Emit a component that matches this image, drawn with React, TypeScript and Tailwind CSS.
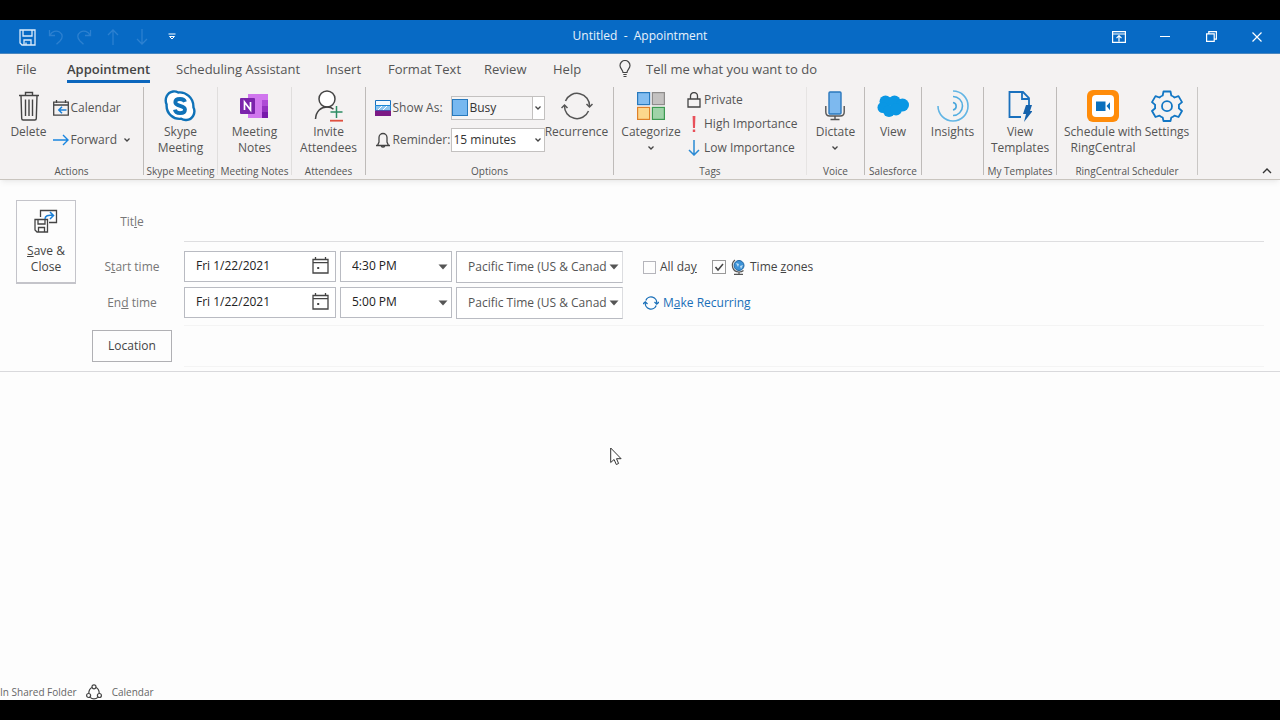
import type { ReactNode } from "react"
import clsx from "clsx"

const tabs = [
  { label: "File", width: "w-[68px]" },
  { label: "Appointment", width: "w-[109px]", active: true },
  { label: "Scheduling Assistant", width: "w-[150px]" },
  { label: "Insert", width: "w-[62px]" },
  { label: "Format Text", width: "w-[96px]" },
  { label: "Review", width: "w-[69px]" },
  { label: "Help", width: "w-[66px]" },
]

function Group({ label, className, children }: { label: string; className: string; children: ReactNode }) {
  return (
    <section
      aria-label={label || "Insights"}
      className={clsx("flex h-[88px] shrink-0 flex-col justify-between border-r", className)}
    >
      <div className="flex justify-center pt-px">{children}</div>
      <div className="h-3 text-center text-[10px] leading-4 whitespace-nowrap">{label}</div>
    </section>
  )
}

function BigButton({ icon, lines, className, menu }: { icon: ReactNode; lines: string[]; className?: string; menu?: boolean }) {
  return (
    <button type="button" className={clsx("flex flex-col items-center text-center leading-4 whitespace-nowrap", className)}>
      <span className="flex h-9 items-center justify-center">{icon}</span>
      {lines.map((line) => (
        <span key={line}>{line}</span>
      ))}
      {menu && <Chevron className="mt-1" />}
    </button>
  )
}

function SmallButton({ icon, children }: { icon: ReactNode; children: ReactNode }) {
  return (
    <button type="button" className="flex h-6 items-center gap-[2px] whitespace-nowrap">
      <span className="flex w-4 shrink-0 justify-center">{icon}</span>
      {children}
    </button>
  )
}

function Chevron({ className }: { className?: string }) {
  return (
    <svg viewBox="0 0 8 8" className={clsx("size-2", className)} fill="none" stroke="#444" strokeWidth="1.3">
      <path d="M1.500 2.500 4 5l2.500-2.500" />
    </svg>
  )
}

function Caret() {
  return (
    <svg viewBox="0 0 10 6" className="pointer-events-none absolute top-1/2 right-1 h-[6px] w-[10px] -translate-y-1/2">
      <path d="M0.5 0.5h9L5 5.5z" fill="#555" />
    </svg>
  )
}

function SaveIcon() {
  return (
    <svg viewBox="0 0 17 17" className="size-[17px]" fill="none" stroke="#dcebfa" strokeWidth="1.3">
      <path d="M1 1h15v15H3L1 14zM4 1v6h9V1M5 16v-5h7v5M7 13.5V16" />
    </svg>
  )
}

function TrashIcon() {
  return (
    <svg viewBox="0 0 22 30" className="h-[30px] w-[22px]" fill="none" stroke="#444" strokeWidth="1.4">
      <path d="M1 4.5h20M7.5 4.500V1.500h7v3M3 4.500l.7 23q0 1.500 1.500 1.500h11.600q1.500 0 1.500-1.500l.7-23M7.500 8.500v16.500M11 8.500v16.500M14.500 8.500v16.500" />
    </svg>
  )
}

function CalendarBackIcon() {
  return (
    <svg viewBox="0 0 16 16" className="size-4" fill="none">
      <path d="M.7 2.200h14.600v13H.7zM.7 5h14.600M3.500 0v3M12.500 0v3" stroke="#444" strokeWidth="1.3" />
      <path d="M13.500 10H6M9 6.800 5.800 10 9 13.200" stroke="#1a7fd6" strokeWidth="1.5" />
    </svg>
  )
}

function SkypeIcon() {
  return (
    <svg viewBox="0 0 32 32" className="size-8">
      <path
        d="M9 1.500c2-.3 3.800.2 5.200 1C21.500 1.600 29.800 7.500 29.400 17.300c2.800 5.500-.8 12.300-7 12.700-2 .2-3.800-.3-5.200-1.200C9.500 29.800 2 23.500 2.600 14.500.2 9 3 2.500 9 1.500z"
        fill="#fff"
        stroke="#0f72b8"
        strokeWidth="2.400"
      />
      <path
        d="M21 11.800C20.300 9.700 18.500 9 16 9c-3 0-4.700 1.300-4.700 3.300 0 4.700 9.700 2.400 9.700 7.200 0 2.400-2.100 3.600-5 3.600-2.700 0-4.700-1.200-5.100-3.500"
        fill="none"
        stroke="#0f72b8"
        strokeWidth="3.800"
      />
    </svg>
  )
}

function OneNoteIcon() {
  return (
    <svg viewBox="0 0 28 26" className="h-[26px] w-7">
      <path d="M8 1h20v24H8z" fill="#d076ee" />
      <path d="M22 7h6v6h-6z" fill="#ae4bd5" />
      <path d="M22 13h6v6h-6z" fill="#9332bf" />
      <path d="M22 19h6v6h-6z" fill="#7719aa" />
      <rect y="5" width="15" height="16" rx="1" fill="#7b23ab" />
      <path d="M4.500 17V9l6 8V9" fill="none" stroke="#fff" strokeWidth="1.700" />
    </svg>
  )
}

function InviteIcon() {
  return (
    <svg viewBox="0 0 30 32" className="h-8 w-[30px]" fill="none" strokeWidth="1.500">
      <circle cx="13" cy="9" r="8" fill="#fff" stroke="#444" />
      <path d="M1.500 29C2 21 7 17 13 17c3 0 5 .8 6.500 2.200" stroke="#444" />
      <path d="M22.500 16v12M16.500 22h12" stroke="#2c8c63" />
      <path d="M16 30.700h13" stroke="#e0503f" strokeWidth="1.800" />
    </svg>
  )
}

function RecurrenceIcon() {
  return (
    <svg viewBox="0 0 32 28" className="h-7 w-8" fill="none" stroke="#555" strokeWidth="1.500">
      <path d="M4.500 9a12.500 12.500 0 0 1 24 5.500M27.500 19a12.500 12.500 0 0 1-24-5.500" />
      <path d="m25.500 12 3 3 3-3M.5 16l3-3 3 3" />
    </svg>
  )
}

function CategorizeIcon() {
  return (
    <svg viewBox="0 0 28 28" className="size-7" strokeWidth="1.200">
      <rect x=".6" y=".6" width="12" height="12" fill="#83bdf0" stroke="#2779bd" />
      <rect x="15.400" y=".6" width="12" height="12" fill="#c4c2c1" stroke="#8e8c8b" />
      <rect x=".6" y="15.400" width="12" height="12" fill="#fcd78c" stroke="#df8028" />
      <rect x="15.400" y="15.400" width="12" height="12" fill="#9fd3a8" stroke="#3d9a52" />
    </svg>
  )
}

function DictateIcon() {
  return (
    <svg viewBox="0 0 20 30" className="h-[30px] w-5" fill="none">
      <rect x="4" y="1" width="12" height="22" rx="1" fill="#7db9ef" stroke="#2a78bd" strokeWidth="1.400" />
      <path d="M.8 15v6q0 4 4 4h10.400q4 0 4-4v-6M10 25v3.500M5.500 28.500h9" stroke="#555" strokeWidth="1.400" />
    </svg>
  )
}

function SalesforceIcon() {
  return (
    <svg viewBox="0 0 32 24" className="h-6 w-8" fill="#0a97e4">
      <circle cx="8.500" cy="7.500" r="6" />
      <circle cx="17.500" cy="7.500" r="6" />
      <circle cx="25.500" cy="11" r="6.500" />
      <circle cx="6" cy="13.500" r="5.500" />
      <circle cx="12" cy="17" r="6" />
      <circle cx="19" cy="15.500" r="6" />
    </svg>
  )
}

function InsightsIcon() {
  return (
    <svg viewBox="0 0 32 32" className="size-8" fill="none" strokeWidth="1.600">
      <path d="M16 1a15 15 0 1 1-15 15" stroke="#62b5e4" />
      <path d="M16 6.500a9.500 9.500 0 0 1 0 19" stroke="#53ade0" />
      <path d="M16 12.500a3.800 3.800 0 0 1 0 7.500" stroke="#4aa6dc" />
    </svg>
  )
}

function TemplatesIcon() {
  return (
    <svg viewBox="0 0 24 32" className="h-8 w-6" fill="none">
      <path d="M13 27H1.500V2H15l6 6v8M14 2v7h7" stroke="#1a70bd" strokeWidth="1.800" />
      <path d="M18 15h6l-2 6h2.500L16 32l2-8h-3z" fill="#1562ac" />
    </svg>
  )
}

function RingCentralIcon() {
  return (
    <svg viewBox="0 0 32 32" className="size-8">
      <rect width="32" height="32" rx="6" fill="#ff8c0a" />
      <rect x="5" y="5" width="22" height="22" rx="4" fill="#fff" />
      <path d="M9 11.500h9.500v9.500H9zM19.500 16l3.500-3.800v8z" fill="#0a70bd" />
    </svg>
  )
}

function GearIcon() {
  return (
    <svg viewBox="0 0 32 32" className="size-8" fill="none" stroke="#1176c4" strokeWidth="1.800" strokeLinejoin="round">
      <path d="M12.500 1.500h7l.8 4q1.800.7 3.200 2l4-1.400 3.500 6-3.200 2.800q.3 1.800 0 3.400l3.200 2.700-3.500 6-4-1.400q-1.400 1.200-3.200 1.900l-.8 3.500h-7l-.8-3.500q-1.800-.7-3.200-1.900l-4 1.400-3.500-6 3.200-2.700q-.3-1.600 0-3.400L1 12.100l3.500-6 4 1.400q1.400-1.300 3.200-2z" />
      <circle cx="16" cy="16.200" r="5" />
    </svg>
  )
}

function DateIcon() {
  return (
    <svg viewBox="0 0 17 17" className="pointer-events-none absolute top-[6px] right-[7px] size-[17px]" fill="none" stroke="#444" strokeWidth="1.300">
      <path d="M1 2.500h15v13.500H1zM1 5.700h15M3.500 0v3M13.500 0v3" />
      <path d="M5.200 10h2v2h-2z" fill="#444" stroke="none" />
    </svg>
  )
}

function TimeRow({ id, label, time, children }: { id: string; label: ReactNode; time: string; children: ReactNode }) {
  return (
    <div className="flex h-9 items-center">
      <label htmlFor={`${id}-date`} className="w-20 text-center text-[#777]">
        {label}
      </label>
      <div className="ml-3 flex gap-1">
        <div className="relative">
          <input
            id={`${id}-date`}
            defaultValue="Fri 1/22/2021"
            className="h-[31px] w-[152px] border border-[#b9bbc2] bg-white pb-[2px] pl-[11px] text-[#222]"
          />
          <DateIcon />
        </div>
        <div className="relative">
          <select
            aria-label={`${id} time of day`}
            className="h-[31px] w-[112px] appearance-none border border-[#b9bbc2] bg-white pb-[2px] pl-[11px] text-[#222]"
          >
            <option>{time}</option>
          </select>
          <Caret />
        </div>
        <div className="relative">
          <select
            aria-label={`${id} time zone`}
            className="h-8 w-[167px] appearance-none border border-r-[#dcdde0] border-[#b9bbc2] bg-white pr-3 pl-[11px] text-[#555]"
          >
            <option>Pacific Time (US &amp; Canad</option>
          </select>
          <Caret />
        </div>
      </div>
      <div className="ml-5 flex items-center text-[#444]">{children}</div>
    </div>
  )
}

function TitleBar() {
  return (
    <header className="grid h-[34px] grid-cols-[1fr_auto_1fr] items-center border-b border-[#4a87bf] bg-[#076ac5] text-[#e8f2fc]">
      <div className="flex items-center gap-3 pt-px pl-[19px]">
        <button type="button" aria-label="Save">
          <SaveIcon />
        </button>
        <button type="button" aria-label="Undo">
          <svg viewBox="0 0 16 16" className="size-4" fill="none" stroke="#2c80d0" strokeWidth="1.300">
            <path d="M1.500 1v5.500H7M1.800 6.300C4 2.500 8 1 11.500 3c3.500 2.300 3.500 6 .5 9l-3.500 3.300" />
          </svg>
        </button>
        <button type="button" aria-label="Redo">
          <svg viewBox="0 0 16 16" className="size-4" fill="none" stroke="#2c80d0" strokeWidth="1.300">
            <path d="M14.500 1v5.500H9M14.200 6.300C12 2.500 8 1 4.500 3 1 5.300 1 9 4 12l3.500 3.300" />
          </svg>
        </button>
        <button type="button" aria-label="Previous item">
          <svg viewBox="0 0 16 18" className="h-[18px] w-4" fill="none" stroke="#2c80d0" strokeWidth="1.300">
            <path d="M9 17V2M4 7l5-5 5 5" />
          </svg>
        </button>
        <button type="button" aria-label="Next item">
          <svg viewBox="0 0 16 18" className="h-[18px] w-4" fill="none" stroke="#2c80d0" strokeWidth="1.300">
            <path d="M10 1v15M5 11l5 5 5-5" />
          </svg>
        </button>
        <button type="button" aria-label="Customize toolbar" className="ml-2">
          <svg viewBox="0 0 8 8" className="size-2" fill="none" stroke="#fff" strokeWidth="1">
            <path d="M.5 1h7M1.500 3.500 4 6l2.500-2.500z" />
          </svg>
        </button>
      </div>
      <h1 className="pb-[2px] text-[12px] whitespace-pre">Untitled  -  Appointment</h1>
      <div className="flex justify-end">
        <button type="button" aria-label="Ribbon display options" className="flex w-[46px] justify-center">
          <svg viewBox="0 0 14 12" className="h-3 w-[14px]" fill="none" stroke="#fff" strokeWidth="1.200">
            <path d="M.6.6h12.800v10.800H.6zM.6 3h12.800M7 10.500V5M4.500 7.200 7 4.700l2.500 2.500" />
          </svg>
        </button>
        <button type="button" aria-label="Minimize" className="flex w-[46px] items-center justify-center">
          <span className="h-px w-[10px] bg-white" />
        </button>
        <button type="button" aria-label="Restore" className="flex w-[46px] items-center justify-center">
          <svg viewBox="0 0 11 11" className="size-[11px]" fill="none" stroke="#fff" strokeWidth="1.200">
            <path d="M.6 2.800h7.600v7.600H.6zM2.800 2.800V.6h7.600v7.600H8.200" />
          </svg>
        </button>
        <button type="button" aria-label="Close" className="flex w-[46px] items-center justify-center">
          <svg viewBox="0 0 10 10" className="size-[10px]" fill="none" stroke="#fff" strokeWidth="1.200">
            <path d="m.5.5 9 9M9.500.5l-9 9" />
          </svg>
        </button>
      </div>
    </header>
  )
}

function Ribbon() {
  return (
    <div className="flex items-start border-b border-[#c9c5bf] bg-[#f4f2f2] pt-[3px] pb-[4px] text-[#555] shadow-md shadow-black/5">
      <Group label="Actions" className="w-36 border-[#bebbb9]">
        <BigButton className="ml-1 w-12" icon={<TrashIcon />} lines={["Delete"]} />
        <div className="flex w-[90px] flex-col gap-2 pt-2">
          <SmallButton icon={<CalendarBackIcon />}>Calendar</SmallButton>
          <button type="button" className="flex h-6 items-center gap-[2px]">
            <svg viewBox="0 0 16 12" className="h-3 w-4" fill="none" stroke="#1a86e0" strokeWidth="1.400">
              <path d="M0 6h15M10 1l5 5-5 5" />
            </svg>
            Forward
            <Chevron className="ml-1" />
          </button>
        </div>
      </Group>
      <Group label="Skype Meeting" className="w-[74px] border-[#e0dedd]">
        <BigButton icon={<SkypeIcon />} lines={["Skype", "Meeting"]} />
      </Group>
      <Group label="Meeting Notes" className="w-[74px] border-[#e0dedd]">
        <BigButton icon={<OneNoteIcon />} lines={["Meeting", "Notes"]} />
      </Group>
      <Group label="Attendees" className="w-[74px] border-[#bebbb9]">
        <BigButton icon={<InviteIcon />} lines={["Invite", "Attendees"]} />
      </Group>
      <Group label="Options" className="w-[248px] border-[#bebbb9]">
        <div className="ml-1 grid grid-cols-[76px_94px] gap-y-2 pt-2">
          <label htmlFor="show-as" className="flex h-6 items-center gap-[2px] whitespace-nowrap">
            <svg viewBox="0 0 16 16" className="size-4 shrink-0">
              <path d="M.5.5h15v5H.5z" fill="#f5fafe" stroke="#1a70bd" />
              <path d="M.5 5.500h15v5H.5z" fill="#8ec4ee" stroke="#1a86d6" />
              <path d="m3 10 4-4M8 10l4-4" stroke="#fff" />
              <path d="M0 10.500h16V16H0z" fill="#7b1a85" />
            </svg>
            Show As:
          </label>
          <div className="relative">
            <select id="show-as" className="h-6 w-full appearance-none border border-[#c3c1c0] bg-[#f6f5f5] pl-[18px] text-[#333]">
              <option>Busy</option>
            </select>
            <span className="pointer-events-none absolute top-[3px] left-px h-[17px] w-4 border border-[#2779bd] bg-[#77b8f0]" />
            <span className="pointer-events-none absolute top-px right-px flex h-[22px] w-3 items-center justify-center border-l border-[#c3c1c0] bg-white">
              <Chevron />
            </span>
          </div>
          <label htmlFor="reminder" className="flex h-6 items-center gap-[2px] whitespace-nowrap">
            <svg viewBox="0 0 16 18" className="h-[18px] w-4 shrink-0" fill="none" stroke="#444" strokeWidth="1.300">
              <path d="M1 14.500h14M2.500 14.500 4 11V6.500a4 4 0 0 1 8 0V11l1.500 3.500M6.300 15a1.800 1.800 0 0 0 3.400 0" />
            </svg>
            Reminder:
          </label>
          <div className="relative">
            <select id="reminder" className="h-6 w-full appearance-none border border-[#c3c1c0] bg-white pl-[2px] text-[#333]">
              <option>15 minutes</option>
            </select>
            <Chevron className="pointer-events-none absolute top-2 right-[3px]" />
          </div>
        </div>
        <BigButton className="w-16" icon={<RecurrenceIcon />} lines={["Recurrence"]} />
      </Group>
      <Group label="Tags" className="w-[193px] border-[#e6e4e3]">
        <BigButton className="mr-1 w-[62px]" icon={<CategorizeIcon />} lines={["Categorize"]} menu />
        <div className="flex w-[114px] flex-col">
          <SmallButton
            icon={
              <svg viewBox="0 0 14 16" className="h-4 w-[14px]" fill="none" stroke="#444" strokeWidth="1.300">
                <path d="M1 7h12v8H1zM3.500 7V4a3.500 3.500 0 0 1 7 0v3" />
              </svg>
            }
          >
            Private
          </SmallButton>
          <SmallButton
            icon={
              <svg viewBox="0 0 4 16" className="h-4 w-1" fill="#e8505a">
                <path d="M.6 0h2.800L3 12H1zM.8 13.500h2.400V16H.8z" />
              </svg>
            }
          >
            High Importance
          </SmallButton>
          <SmallButton
            icon={
              <svg viewBox="0 0 12 16" className="h-4 w-3" fill="none" stroke="#2a8ad4" strokeWidth="1.500">
                <path d="M6 0v15M1 10l5 5 5-5" />
              </svg>
            }
          >
            Low Importance
          </SmallButton>
        </div>
      </Group>
      <Group label="Voice" className="w-[58px] border-[#bebbb9]">
        <BigButton icon={<DictateIcon />} lines={["Dictate"]} menu />
      </Group>
      <Group label="Salesforce" className="w-[57px] border-[#bebbb9]">
        <BigButton icon={<SalesforceIcon />} lines={["View"]} />
      </Group>
      <Group label="" className="w-[62px] border-[#bebbb9]">
        <BigButton icon={<InsightsIcon />} lines={["Insights"]} />
      </Group>
      <Group label="My Templates" className="w-[73px] border-[#bebbb9]">
        <BigButton icon={<TemplatesIcon />} lines={["View", "Templates"]} />
      </Group>
      <Group label="RingCentral Scheduler" className="w-[141px] border-[#c9c7c5]">
        <BigButton className="w-20" icon={<RingCentralIcon />} lines={["Schedule with", "RingCentral"]} />
        <BigButton className="w-12" icon={<GearIcon />} lines={["Settings"]} />
      </Group>
      <button type="button" aria-label="Collapse the ribbon" className="mr-2 ml-auto self-end">
        <svg viewBox="0 0 10 8" className="h-2 w-[10px]" fill="none" stroke="#333" strokeWidth="1.400">
          <path d="m1 6 4-4 4 4" />
        </svg>
      </button>
    </div>
  )
}

function AppointmentForm() {
  return (
    <form className="flex items-start gap-4 border-b border-[#d9d9dc] px-4 pt-5">
      <button
        type="button"
        className="flex h-[84px] w-[60px] shrink-0 flex-col items-center border border-b-2 border-[#c4c4ca] pt-[8px] leading-4 text-[#444]"
      >
        <svg viewBox="0 0 24 24" className="mb-[10px] size-6" fill="none" stroke="#444" strokeWidth="1.300">
          <path d="M6.500 8V1.500h16v12H15" />
          <path d="M1 10.500h12.500v12.500H3L1 21zM4 10.500v4.500h7v-4.500M4.500 23v-4.500h6V23" />
          <path d="M11 10c0-3 3-4.500 8-3.500M16 3l3.500 3.500L16 10" stroke="#1a7fd6" strokeWidth="1.500" />
        </svg>
        <span>
          <u>S</u>ave &amp;
        </span>
        <span>Close</span>
      </button>
      <div className="min-w-0 flex-1">
        <div className="mb-[7px] flex h-[42px]">
          <label htmlFor="title" className="w-20 text-center leading-[44px] text-[#777]">
            Tit<u>l</u>e
          </label>
          <input id="title" className="ml-3 flex-1 border-b border-[#dedee0] outline-none" />
        </div>
        <TimeRow id="start" label={<>S<u>t</u>art time</>} time="4:30 PM">
          <label className="flex w-[69px] items-center gap-1">
            <input type="checkbox" className="size-[13px] appearance-none border border-[#b5b5bb]" />
            <span>
              All da<u>y</u>
            </span>
          </label>
          <label className="flex items-center gap-1">
            <span className="relative flex">
              <input type="checkbox" defaultChecked className="size-[14px] appearance-none border border-[#999]" />
              <svg viewBox="0 0 14 14" className="pointer-events-none absolute inset-0 size-[14px]" fill="none" stroke="#444" strokeWidth="1.500">
                <path d="m3.500 7 2.500 3 5-6" />
              </svg>
            </span>
            <svg viewBox="0 0 16 16" className="size-4" fill="none">
              <circle cx="9" cy="6.500" r="5" fill="#3d93d8" stroke="#2467a0" />
              <path d="m6 4 3 1-1 3zM10 7l3-1-2 4z" fill="#bfe0f5" />
              <path d="M5 1C0 5 2.500 13 9 13c2 0 3.500-.6 4.500-1.500M9 13v2M4 15.300h9" stroke="#555" strokeWidth="1.200" />
            </svg>
            <span>
              Time <u>z</u>ones
            </span>
          </label>
        </TimeRow>
        <TimeRow id="end" label={<>En<u>d</u> time</>} time="5:00 PM">
          <a href="#recurring" className="flex items-center gap-1 text-[#1a6fb8]">
            <svg viewBox="0 0 16 14" className="h-[14px] w-4" fill="none" stroke="currentColor" strokeWidth="1.300">
              <path d="M2.800 4.500A5.700 5.700 0 0 1 13.700 7.500M13.200 9.500A5.700 5.700 0 0 1 2.300 6.500" />
              <path d="m11.500 6 2.200 2.200L16 6M0 8l2.300-2.200L4.500 8" />
            </svg>
            <span>
              M<u>a</u>ke Recurring
            </span>
          </a>
        </TimeRow>
        <div className="mt-[4px] mb-[4px] flex h-[42px] items-center">
          <button type="button" className="h-8 w-20 border border-[#b0b0b4] text-[#444]">
            Location
          </button>
          <input aria-label="Location" className="ml-3 h-full flex-1 border-y border-[#f4f4f4] outline-none" />
        </div>
      </div>
    </form>
  )
}

export default function App() {
  return (
    <div className="flex min-h-screen flex-col bg-black py-5 font-['Open_Sans','Noto_Sans',sans-serif] text-[12px]">
      <main className="flex flex-1 flex-col bg-[#fdfdfd]">
        <TitleBar />
        <nav aria-label="Ribbon tabs" className="flex h-[30px] items-center bg-[#f4f2f2] pl-4 text-[13px] text-[#555]">
          {tabs.map((tab) => (
            <div key={tab.label} className={clsx("shrink-0 first:w-[51px]", tab.width)}>
              <button
                type="button"
                className={clsx(
                  "h-7 border-b-3 leading-7 whitespace-nowrap",
                  tab.active ? "border-[#0b66bd] font-semibold text-[#444]" : "border-transparent"
                )}
              >
                {tab.label}
              </button>
            </div>
          ))}
          <svg viewBox="0 0 12 18" className="mr-[15px] h-[18px] w-3" fill="none" stroke="#444" strokeWidth="1.200">
            <path d="M4 12.500C4 10 1 8.500 1 5.500a5 5 0 0 1 10 0C11 8.500 8 10 8 12.500zM4.300 14.500h3.400M4.500 16.500h3" />
          </svg>
          <button type="button" className="h-7 leading-7">
            Tell me what you want to do
          </button>
        </nav>
        <Ribbon />
        <AppointmentForm />
        <textarea aria-label="Message body" className="flex-1 resize-none outline-none" />
        <footer className="flex h-4 items-center text-[10px] text-[#666]">
          In Shared Folder
          <svg viewBox="0 0 16 16" className="mr-[10px] ml-[9px] size-4" fill="none" stroke="#444" strokeWidth="1.200">
            <circle cx="8" cy="2.800" r="2" />
            <circle cx="2.600" cy="11.500" r="2" />
            <circle cx="13.400" cy="11.500" r="2" />
            <path d="M6 3.500C3.800 4.500 2.800 6.500 2.800 9.300M10 3.500c2.200 1 3.200 3 3.200 5.800M4.200 13.300c2 2 5.600 2 7.600 0" />
          </svg>
          Calendar
        </footer>
      </main>
      <svg viewBox="0 0 12 19" className="pointer-events-none absolute top-[447px] left-[610px] h-[19px] w-3">
        <path d="M.7 1v14.500l3.400-3 2.200 5 2.300-1-2.100-4.800h4.600z" fill="#fff" stroke="#333" />
      </svg>
    </div>
  )
}
